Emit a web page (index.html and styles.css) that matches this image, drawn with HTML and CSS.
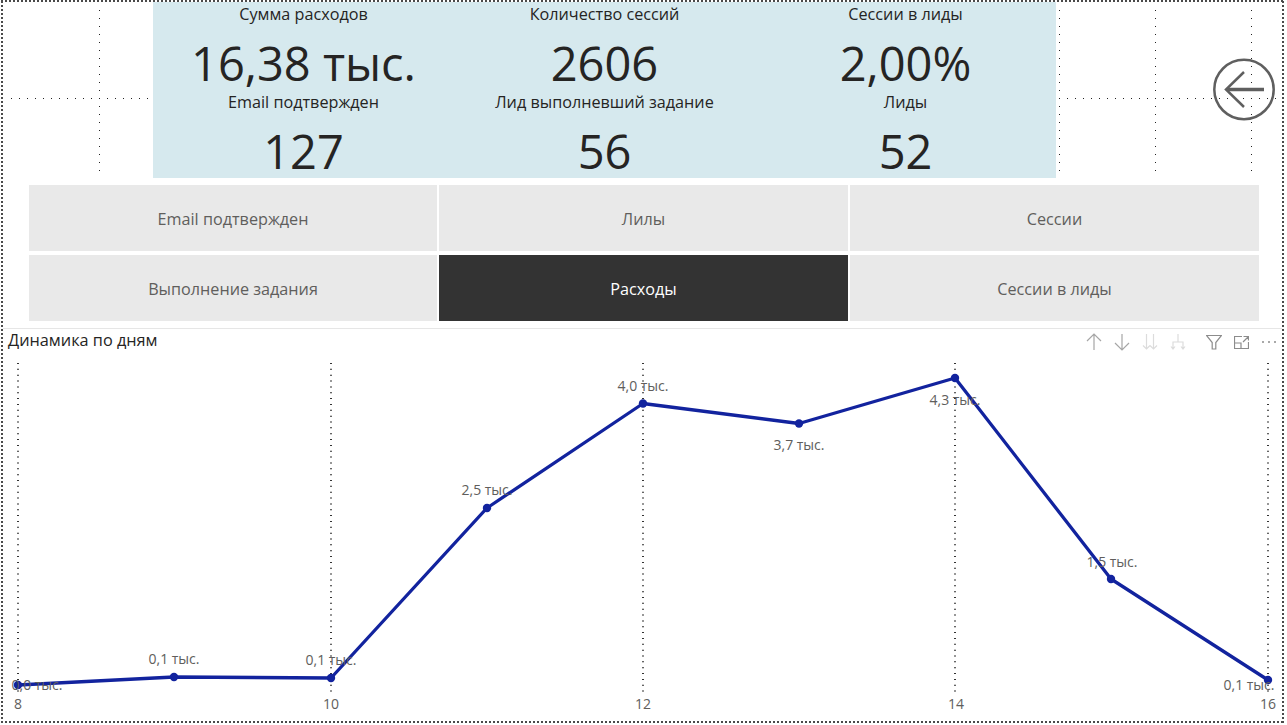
FILE: index.html
```html
<!DOCTYPE html>
<html lang="ru">
<head>
    <meta charset="utf-8">
    <title>Динамика по дням</title>
    <link rel="stylesheet" href="styles.css">
</head>
<body>
<div class="report">
    <!-- canvas grid behind the cards -->
    <svg class="canvas-grid" width="1287" height="200" viewBox="0 0 1287 200">
        <g class="dots">
            <line x1="11" y1="98.5" x2="1280" y2="98.5"/>
            <line x1="99.5" y1="10" x2="99.5" y2="174"/>
            <line x1="1059.5" y1="10" x2="1059.5" y2="174"/>
            <line x1="1155.5" y1="10" x2="1155.5" y2="174"/>
            <line x1="1251.5" y1="10" x2="1251.5" y2="174"/>
        </g>
    </svg>

    <div class="kpis">
        <div class="kpi"><div class="kpi-label">Сумма расходов</div><div class="kpi-value">16,38 тыс.</div></div>
        <div class="kpi"><div class="kpi-label">Количество сессий</div><div class="kpi-value">2606</div></div>
        <div class="kpi"><div class="kpi-label">Сессии в лиды</div><div class="kpi-value">2,00%</div></div>
        <div class="kpi"><div class="kpi-label">Email подтвержден</div><div class="kpi-value">127</div></div>
        <div class="kpi"><div class="kpi-label">Лид выполневший задание</div><div class="kpi-value">56</div></div>
        <div class="kpi"><div class="kpi-label">Лиды</div><div class="kpi-value">52</div></div>
    </div>

    <svg class="back-btn" width="64" height="64" viewBox="0 0 64 64">
        <circle cx="32" cy="32.500" r="29.700"/>
        <path class="shaft" d="M52 32.500H15"/>
        <path d="M32 15L14 32.500L32 50"/>
    </svg>

    <div class="tabs">
        <div class="tab">Email подтвержден</div>
        <div class="tab">Лилы</div>
        <div class="tab">Сессии</div>
        <div class="tab">Выполнение задания</div>
        <div class="tab active">Расходы</div>
        <div class="tab">Сессии в лиды</div>
    </div>

    <div class="visual">
        <div class="visual-head">
            <div class="visual-title">Динамика по дням</div>
            <div class="visual-icons">
                <svg class="icon" width="16" height="18" viewBox="0 0 16 18"><path d="M8 17V1M1 8L8 1L15 8"/></svg>
                <svg class="icon" width="16" height="18" viewBox="0 0 16 18"><path d="M8 1V17M1 10L8 17L15 10"/></svg>
                <svg class="icon faint" width="16" height="18" viewBox="0 0 16 18"><path d="M4.500 1V16M1 12.500L4.500 16L8 12.500M11.500 1V16M8 12.500L11.500 16L15 12.500"/></svg>
                <svg class="icon faint" width="16" height="18" viewBox="0 0 16 18"><path d="M8 1V9M3 16V9H13V16M1 13.500L3 16L5 13.500M11 13.500L13 16L15 13.500"/></svg>
                <svg class="icon filter" width="16" height="15" viewBox="0 0 16 15"><path d="M.5 .5H15.500L9.800 7.500V14H6.200V7.500Z"/></svg>
                <svg class="icon expand" width="15" height="13" viewBox="0 0 15 13"><path d="M8 .5H.5V12.500H14.500V6M.5 7H7V12.500M9.500 .5H14.500V4.500M14.500 .5L9 6"/></svg>
                <svg class="icon more" width="16" height="4" viewBox="0 0 16 4"><circle cx="2" cy="2" r="1"/><circle cx="8" cy="2" r="1"/><circle cx="14" cy="2" r="1"/></svg>
            </div>
        </div>

        <!-- viewBox uses page coordinates so points read off the axis directly -->
        <svg class="chart" width="1280" height="366" viewBox="3 355 1280 366">
            <g class="chart-dots">
                <line x1="18" y1="363" x2="18" y2="694"/>
                <line x1="331" y1="363" x2="331" y2="694"/>
                <line x1="643" y1="363" x2="643" y2="694"/>
                <line x1="955" y1="363" x2="955" y2="694"/>
                <line x1="1268" y1="363" x2="1268" y2="694"/>
            </g>
            <polyline class="series" points="18,685 174,677 331,678 487,508 643,403.500 799,423.500 955,378 1111,579 1268,680"/>
            <g class="points">
                <circle cx="18" cy="685" r="4.200"/><circle cx="174" cy="677" r="4.200"/><circle cx="331" cy="678" r="4.200"/>
                <circle cx="487" cy="508" r="4.200"/><circle cx="643" cy="403.500" r="4.200"/><circle cx="799" cy="423.500" r="4.200"/>
                <circle cx="955" cy="378" r="4.200"/><circle cx="1111" cy="579" r="4.200"/><circle cx="1268" cy="680" r="4.200"/>
            </g>
            <g class="labels">
                <text x="37" y="690">0,0 тыс.</text>
                <text x="174" y="664">0,1 тыс.</text>
                <text x="331" y="665">0,1 тыс.</text>
                <text x="487" y="495">2,5 тыс.</text>
                <text x="643" y="391">4,0 тыс.</text>
                <text x="799" y="450">3,7 тыс.</text>
                <text x="955" y="405">4,3 тыс.</text>
                <text x="1112" y="567">1,5 тыс.</text>
                <text x="1249" y="690">0,1 тыс.</text>
            </g>
            <g class="labels">
                <text x="18" y="709">8</text>
                <text x="331" y="709">10</text>
                <text x="643" y="709">12</text>
                <text x="956" y="709">14</text>
                <text x="1268" y="709">16</text>
            </g>
        </svg>
    </div>
</div>
</body>
</html>
```

FILE: styles.css
```css
body {
    margin: 0;
    background: #fff;
    font-family: "Open Sans", "Noto Sans", sans-serif;
    overflow: hidden;
}

/* square dots, a dotted border would draw them round */
.report {
    position: relative;
    box-sizing: border-box;
    display: flex;
    flex-direction: column;
    width: 1283px;
    height: 723px;
    margin-left: 1px;
    padding: 2px;
    background:
        repeating-linear-gradient(90deg, #4a4a4a 0 2px, transparent 2px 4px) top / 100% 2px no-repeat,
        repeating-linear-gradient(90deg, #4a4a4a 0 2px, transparent 2px 4px) bottom / 100% 2px no-repeat,
        repeating-linear-gradient(0deg, #4a4a4a 0 2px, transparent 2px 4px) left / 2px 100% no-repeat,
        repeating-linear-gradient(0deg, #4a4a4a 0 2px, transparent 2px 4px) right / 2px 100% no-repeat;
}

.canvas-grid {
    position: absolute;
    top: 0;
    left: -1px;
}

.dots line {
    stroke: #222;
    stroke-width: 1;
    stroke-dasharray: 1 7;
}

.kpis {
    position: relative;
    display: grid;
    grid-template-columns: repeat(3, 301px);
    grid-template-rows: 88px 88px;
    width: 903px;
    height: 176px;
    margin-left: 150px;
    background: #d6e9ee;
    text-align: center;
    color: #252423;
}

.kpi-label {
    height: 25px;
    font-size: 16.200px;
    line-height: 25px;
}

.kpi-value {
    font-size: 47px;
    line-height: 72px;
}

.back-btn {
    position: absolute;
    top: 57px;
    left: 1211px;
    fill: none;
    stroke: #5f5f5f;
    stroke-width: 2.500;
}

.back-btn .shaft {
    stroke-width: 3.500;
}

.tabs {
    display: grid;
    grid-template-columns: 408px 409px 409px;
    grid-auto-rows: 66px;
    column-gap: 2px;
    row-gap: 4px;
    margin: 7px 0 0 26px;
    width: 1230px;
}

.tab {
    display: flex;
    align-items: center;
    justify-content: center;
    padding-top: 2px;
    box-sizing: border-box;
    background: #e9e9e9;
    color: #605e5c;
    font-size: 16.200px;
}

.tab.active {
    background: #333;
    color: #fff;
}

.visual {
    margin-top: 7px;
    border-top: 1px solid #e6e6e6;
}

.visual-head {
    display: flex;
    justify-content: space-between;
    height: 26px;
}

.visual-title {
    padding: 1px 0 0 5px;
    font-size: 16.300px;
    line-height: 20px;
    color: #252423;
}

.visual-icons {
    display: flex;
    align-items: center;
    gap: 12px;
    padding-right: 5px;
}

.icon {
    fill: none;
    stroke: #a6a6a6;
    stroke-width: 1.200;
}

.icon.faint {
    stroke: #dcdcdc;
}

.icon.filter {
    margin-left: 8px;
    stroke: #8c8c8c;
}

.icon.expand {
    stroke: #8c8c8c;
}

.icon.more {
    fill: #8c8c8c;
    stroke: none;
}

.chart {
    display: block;
}

.chart-dots line {
    stroke: #333;
    stroke-width: 2;
    stroke-dasharray: 1 4.850;
}

.series {
    fill: none;
    stroke: #12239e;
    stroke-width: 3.300;
    stroke-linejoin: round;
}

.points circle {
    fill: #12239e;
}

.labels text {
    font-size: 14px;
    fill: #605e5c;
    text-anchor: middle;
}
```
